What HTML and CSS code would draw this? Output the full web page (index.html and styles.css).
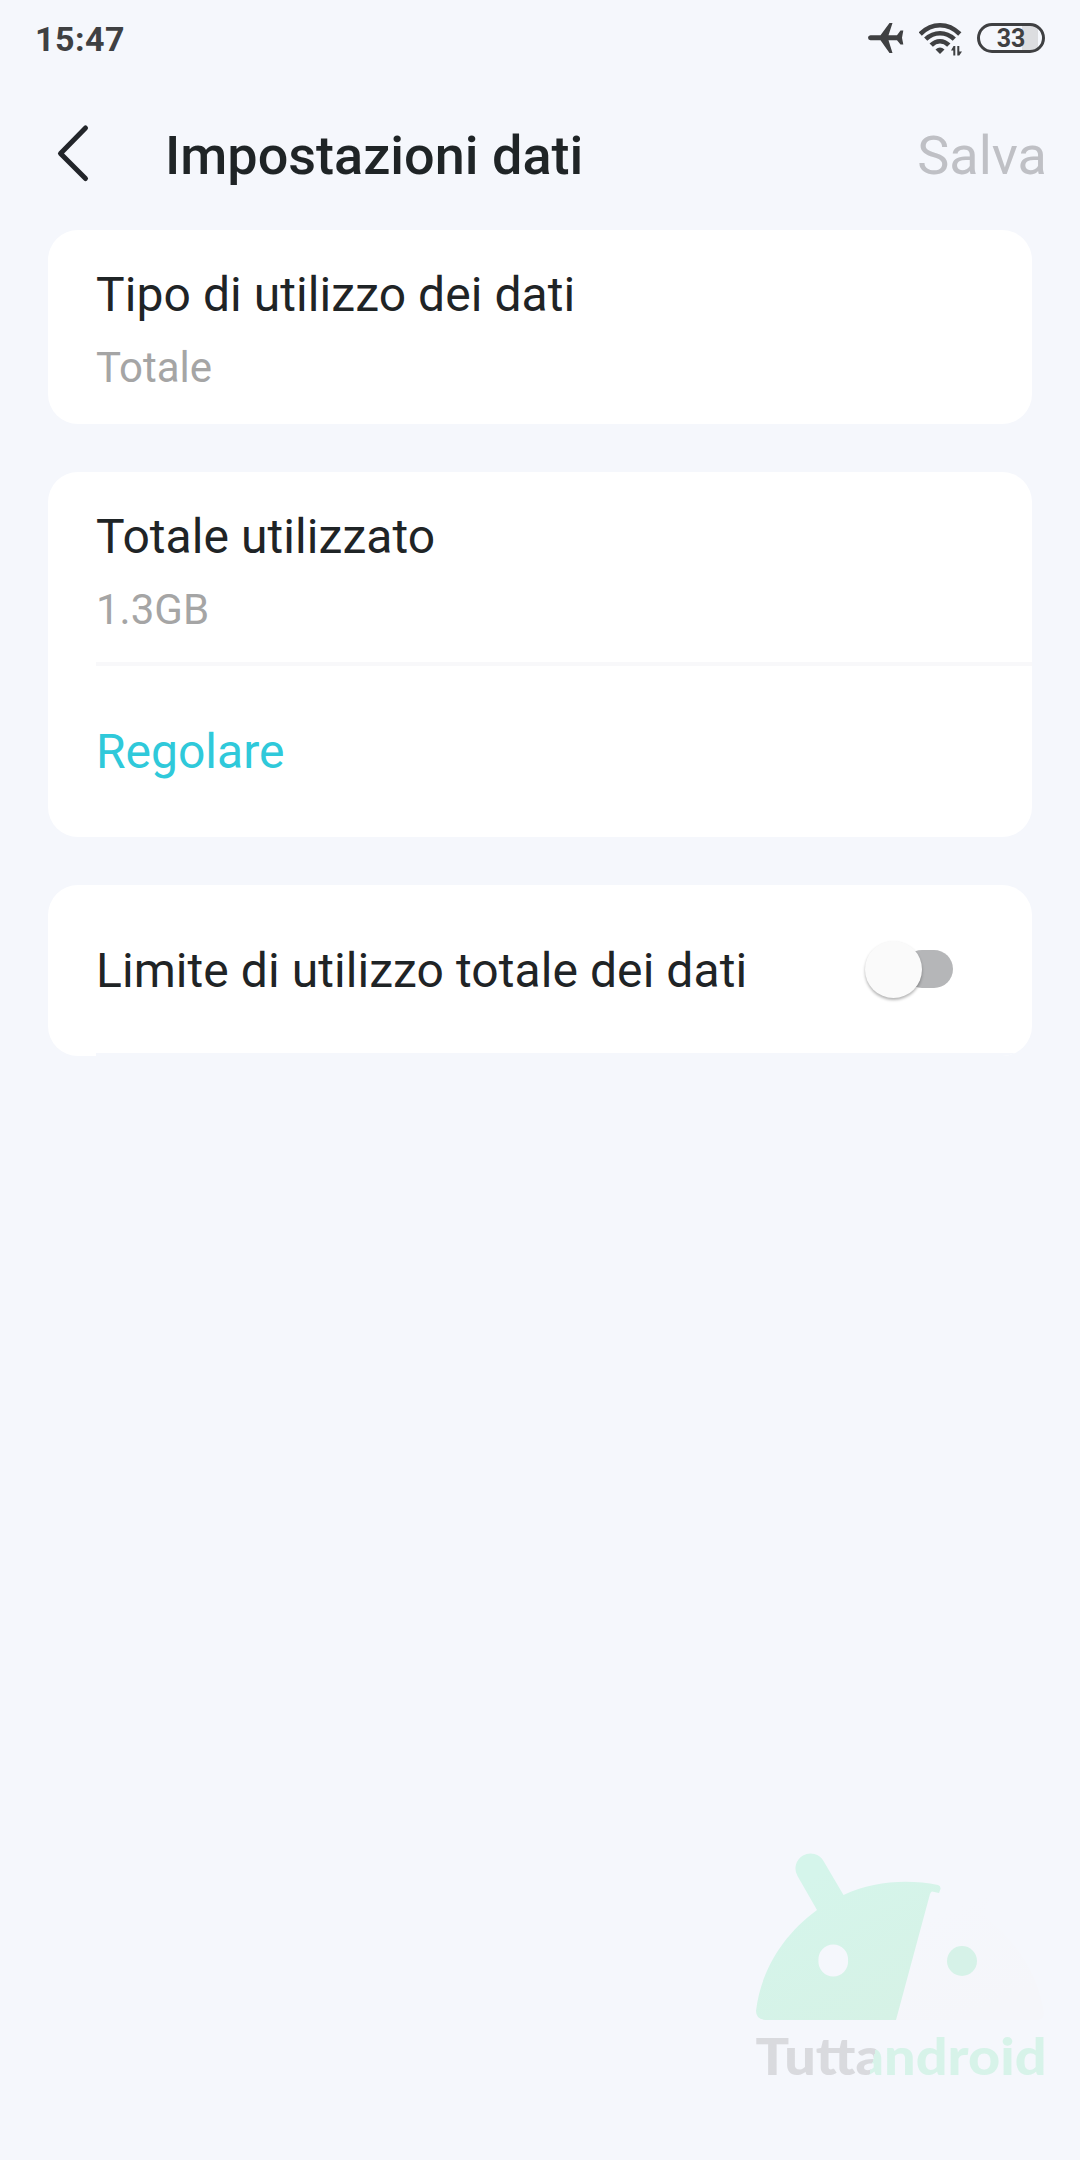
FILE: index.html
```html
<!DOCTYPE html>
<html lang="it">
<head>
<meta charset="utf-8">
<title>Impostazioni dati</title>
<link rel="stylesheet" href="styles.css">
</head>
<body>
<div class="screen">
  <div class="status">
    <span class="time">15:47</span>
    <div class="status-icons">
      <svg class="plane" width="36" height="32" viewBox="0 0 36 32"><path d="M2.500 13.200H12.500L21.500 1H24.500L20.500 13.200H29L32.500 8.500H35.300L34 15.700L35.300 22.500H32.500L29 18.200H20.500L24.500 31H21.500L12.500 18.200H2.500Q0 17.900 0 15.700Q0 13.500 2.500 13.200Z"/></svg>
      <svg class="wifi" width="43" height="34" viewBox="0 0 43 34">
        <g fill="none" stroke="#3f4042" stroke-width="4.600"><path d="M1.200 12Q10 3.200 21 3.200T40.800 12"/><path d="M6.700 17.200Q13 11.200 21 11.200T35.300 17.200"/><path d="M12.200 23.200Q16 19.200 21 19.200T29.800 23.200"/></g>
        <path d="M16.500 27.500Q21 23.500 25.500 27.500L21 32Z"/>
        <path d="M34.300 24V33.500H36.300V24ZM32 28.500L34.300 24.500V28.500ZM38.300 24V33.500H40.300V24ZM40.300 29.500H43L40.300 33.500Z"/>
      </svg>
      <div class="battery">33</div>
    </div>
  </div>
  <header class="bar">
    <svg class="back" width="36" height="60" viewBox="0 0 36 60"><path d="M31.500 5L6.500 30.500L31.500 55.500"/></svg>
    <h1 class="title">Impostazioni dati</h1>
    <span class="save">Salva</span>
  </header>
  <main class="list">
    <section class="card">
      <div class="row"><div class="label">Tipo di utilizzo dei dati</div><div class="value">Totale</div></div>
    </section>
    <section class="card">
      <div class="row used"><div class="label">Totale utilizzato</div><div class="value">1.3GB</div></div>
      <div class="divider"></div>
      <div class="row action">Regolare</div>
    </section>
    <section class="card">
      <div class="row limit"><div class="label">Limite di utilizzo totale dei dati</div><div class="switch"><div class="knob"></div><div class="track"></div></div></div>
      <div class="divider end"></div>
    </section>
  </main>
  <svg class="brand" width="292" height="244" viewBox="756 1852 292 244">
    <defs>
      <linearGradient id="head" x1="790" y1="1890" x2="870" y2="2030" gradientUnits="userSpaceOnUse"><stop offset="0" stop-color="#d5f5eb"/><stop offset="1" stop-color="#d6f2e6"/></linearGradient>
      <linearGradient id="word" x1="873" y1="2060" x2="881" y2="2062" gradientUnits="userSpaceOnUse"><stop offset="0" stop-color="#d9dade"/><stop offset="0" stop-color="#d7f3e9"/></linearGradient>
      <linearGradient id="shade" x1="900" y1="1880" x2="960" y2="2020" gradientUnits="userSpaceOnUse"><stop offset="0.300" stop-color="#f5f7fc"/><stop offset="1" stop-color="#f5f6fa"/></linearGradient>
    </defs>
    <path fill="url(#shade)" d="M931 1892L958 1899L973 1871Q980 1858 992 1858Q1004 1863 1004 1875L982 1914Q1036 1956 1044 2014Q1044 2020 1036 2020H896Z"/>
    <path fill="url(#head)" fill-rule="evenodd" d="M756 2011C761 1970 783 1935 817 1910L797.500 1876A15 15 0 0 1 823.500 1861L843.500 1895C873 1881 908 1879 938 1885Q941 1886 940.500 1889L939 1893L932 1891.500Q931 1891.500 930 1894L896 2020H765Q756 2019 756 2011ZM848 1960.500A14.800 14.800 0 1 0 818.500 1960.500A14.800 14.800 0 1 0 848 1960.500Z"/>
    <circle cx="962" cy="1961" r="15" fill="#d6f2e8"/>
    <text x="755.500" y="2075" textLength="291" lengthAdjust="spacingAndGlyphs" fill="url(#word)" class="wordmark">Tuttandroid</text>
  </svg>
</div>
</body>
</html>
```
FILE: styles.css
```css
* { box-sizing: border-box; }
body { margin: 0; background: #f5f7fc; font-family: Roboto, "Liberation Sans", sans-serif; color: #1f2426; }
.screen { width: 1080px; height: 2160px; display: flex; flex-direction: column; overflow: hidden; }
.status { height: 76px; padding: 0 35px; display: flex; justify-content: space-between; align-items: center; }
.time { margin-top: 2px; font-size: 34px; font-weight: 700; letter-spacing: 0.5px; color: #3f4042; line-height: 60px; }
.status-icons { display: flex; align-items: center; fill: #3f4042; }
.wifi { margin: 2px 15px 0 15px; }
.battery { width: 68px; height: 30px; border: 3px solid #3f4042; border-radius: 15px; color: #3f4042; font-size: 25px; line-height: 26px; font-weight: 700; text-align: center; background: linear-gradient(90deg, transparent 68%, #dcdde0 68%, #dcdde0 94%, transparent 94%); }
.bar { height: 154px; padding: 0 33px 0 54px; display: flex; align-items: center; }
.back { fill: none; stroke: #22252a; stroke-width: 5; stroke-linecap: round; stroke-linejoin: round; }
.title { margin: 6px 0 0 75px; font-size: 54px; font-weight: 500; line-height: 64px; }
.save { margin: 6px 0 0 auto; font-size: 54px; line-height: 64px; color: #bfc0c5; }
.list { padding: 0 48px; display: flex; flex-direction: column; gap: 48px; }
.card { background: #fff; border-radius: 30px; overflow: hidden; }
.row { padding: 35px 48px 31px; }
.used { padding-bottom: 27px; }
.label { font-size: 48px; line-height: 60px; letter-spacing: 0.07px; }
.value { margin-top: 18px; font-size: 42px; line-height: 50px; color: #a5a5a5; }
.divider { height: 4px; margin-left: 48px; background: #f8f8fa; }
.action { height: 171px; padding: 0 48px; line-height: 171px; font-size: 48px; color: #2fc9da; }
.limit { height: 168px; padding: 0 79px 0 48px; display: flex; align-items: center; justify-content: space-between; }
.limit .label { padding-top: 3px; }
.switch { display: flex; align-items: center; }
.knob { position: relative; width: 57px; height: 57px; border-radius: 50%; background: #fafafa; box-shadow: 0 2px 3px rgba(0, 0, 0, 0.3); }
.track { width: 50px; height: 38px; margin-left: -19px; border-radius: 19px; background: #b5b6b8; }
.end { height: 3px; background: #f5f7fc; }
.brand { margin: auto 32px 64px auto; }
.wordmark { font-family: Lato, sans-serif; font-weight: 900; font-size: 51px; }
```
